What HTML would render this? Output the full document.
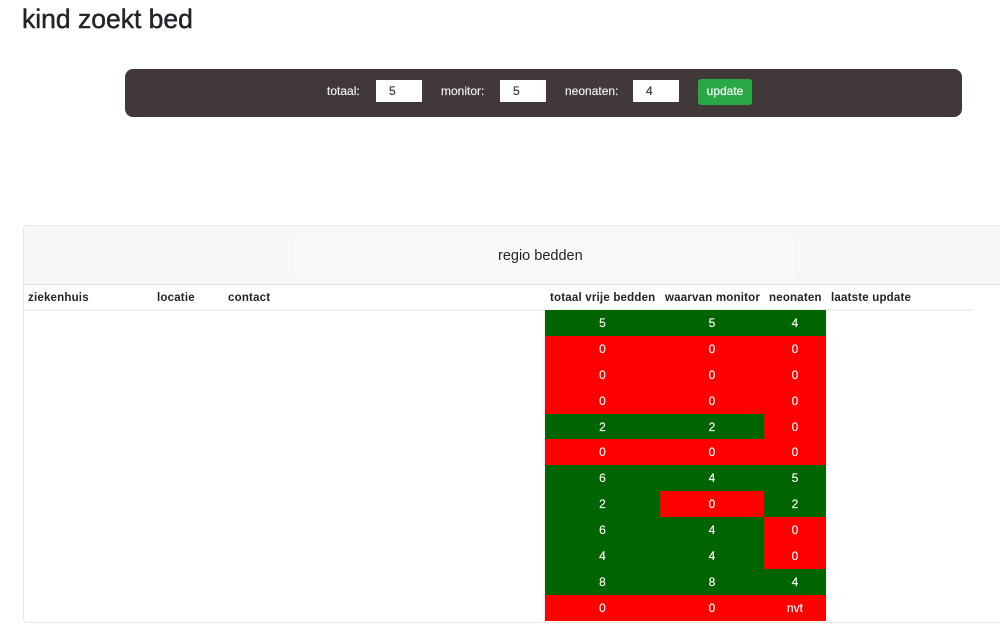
<!DOCTYPE html>
<html lang="nl">
<head>
<meta charset="utf-8">
<title>kind zoekt bed</title>
<style>
html,body{margin:0;padding:0;background:#fff;}
body{position:relative;width:1000px;height:624px;overflow:hidden;font-family:"Liberation Sans",sans-serif;color:#212529;}
div,h1,span,b{position:absolute;margin:0;box-sizing:border-box;white-space:nowrap;}
h1{left:22px;top:4px;font-size:26.5px;line-height:30px;font-weight:400;-webkit-text-stroke:.45px #212529;color:#212529;}
#bar{left:125px;top:69px;width:837px;height:48px;background:#413939;border-radius:8px;}
.l{top:83px;font-size:12px;line-height:16px;color:#f2f0f0;-webkit-text-stroke:.15px #f2f0f0;}
.i{top:80px;width:46px;height:22px;background:#fff;color:#333;font-size:12px;line-height:22px;padding-left:13px;-webkit-text-stroke:.15px #333;}
#btn{left:698px;top:79px;width:54px;height:26px;background:#28a745;border-radius:3px;color:#fff;font-size:12px;line-height:25px;text-align:center;-webkit-text-stroke:.15px #fff;}
#card{left:23px;top:225px;width:990px;height:398px;border:1px solid #e6e6e6;border-radius:4px 0 0 4px;background:#fff;}
#head{left:24px;top:226px;width:976px;height:59px;background:#f7f7f7;border-bottom:1px solid #dedede;}
#inner{left:293px;top:238px;width:501px;height:38px;background:#f8f9fa;}
#title{left:498px;top:246px;font-size:14.5px;line-height:20px;color:#212529;}
#hline{left:24px;top:309px;width:950px;height:2px;background:#f0f0f0;}
.h{top:291px;font-size:11.5px;line-height:15px;font-weight:700;color:#212529;letter-spacing:.2px;}
.g,.r{height:27px;color:#fff;font-size:12px;line-height:27px;text-align:center;-webkit-text-stroke:.15px #fff;}
.g{background:#006400;}
.r{background:#f00;}
.a{left:545px;width:115px;}
.b{left:660px;width:104px;}
.c{left:764px;width:62px;}
</style>
</head>
<body>
<h1>kind zoekt bed</h1>

<div id="bar"></div>
<span class="l" style="left:327px">totaal:</span>
<div class="i" style="left:376px">5</div>
<span class="l" style="left:441px">monitor:</span>
<div class="i" style="left:500px">5</div>
<span class="l" style="left:565px">neonaten:</span>
<div class="i" style="left:633px">4</div>
<div id="btn">update</div>

<div id="card"></div>
<div id="head"></div>
<div id="inner"></div>
<div id="title">regio bedden</div>

<b class="h" style="left:28px">ziekenhuis</b>
<b class="h" style="left:157px">locatie</b>
<b class="h" style="left:228px">contact</b>
<b class="h" style="left:550px">totaal vrije bedden</b>
<b class="h" style="left:665px">waarvan monitor</b>
<b class="h" style="left:769px">neonaten</b>
<b class="h" style="left:831px">laatste update</b>
<div id="hline"></div>

<div class="g a" style="top:310px">5</div><div class="g b" style="top:310px">5</div><div class="g c" style="top:310px">4</div>
<div class="r a" style="top:336px">0</div><div class="r b" style="top:336px">0</div><div class="r c" style="top:336px">0</div>
<div class="r a" style="top:362px">0</div><div class="r b" style="top:362px">0</div><div class="r c" style="top:362px">0</div>
<div class="r a" style="top:388px">0</div><div class="r b" style="top:388px">0</div><div class="r c" style="top:388px">0</div>
<div class="g a" style="top:414px;height:26px">2</div><div class="g b" style="top:414px;height:26px">2</div><div class="r c" style="top:414px">0</div>
<div class="r a" style="top:439px">0</div><div class="r b" style="top:439px">0</div><div class="r c" style="top:439px">0</div>
<div class="g a" style="top:465px">6</div><div class="g b" style="top:465px">4</div><div class="g c" style="top:465px">5</div>
<div class="g a" style="top:491px">2</div><div class="r b" style="top:491px">0</div><div class="g c" style="top:491px">2</div>
<div class="g a" style="top:517px">6</div><div class="g b" style="top:517px">4</div><div class="r c" style="top:517px">0</div>
<div class="g a" style="top:543px">4</div><div class="g b" style="top:543px">4</div><div class="r c" style="top:543px">0</div>
<div class="g a" style="top:569px">8</div><div class="g b" style="top:569px">8</div><div class="g c" style="top:569px">4</div>
<div class="r a" style="top:595px;height:26px">0</div><div class="r b" style="top:595px;height:26px">0</div><div class="r c" style="top:595px;height:26px">nvt</div>
</body>
</html>
